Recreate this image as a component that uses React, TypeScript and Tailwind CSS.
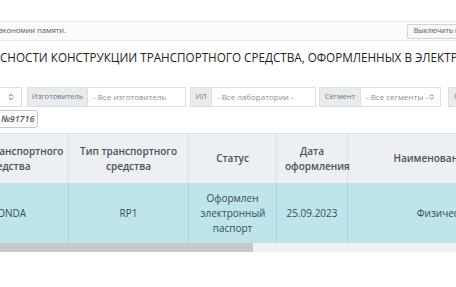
import { ChevronsUpDown } from "lucide-react";

const columns = [
  { title: "Марка транспортного средства", width: "w-[121px]" },
  { title: "Тип транспортного средства", width: "w-[120px]" },
  { title: "Статус", width: "w-[88px]" },
  { title: "Дата оформления", width: "w-[71px]" },
  { title: "Наименование заявителя", width: "w-[224px]" },
];

const row = ["HONDA", "RP1", "Оформлен электронный паспорт", "25.09.2023", "Физическое лицо"];

function Addon({ label, className }: { label: string; className: string }) {
  return (
    <div className={`flex h-[20px] shrink-0 items-center justify-center border border-[#dcdfe3] bg-[#e9ecef] text-[7.6px] text-[#6c757d] ${className}`}>
      {label}
    </div>
  );
}

export default function App() {
  return (
    <div className="h-[287px] w-[456px] overflow-hidden bg-white font-['Open_Sans',sans-serif] text-[#212529]">
      <div className="h-[21px]" />

      {/* notice bar */}
      <div className="flex h-[20px] items-center justify-between overflow-hidden border-y border-[#e6e8eb] bg-[#fafbfc]">
        <span className="-ml-[1px] text-[7.5px] text-[#555]">экономии памяти.</span>
        <button className="-mr-[40px] h-[15px] shrink-0 whitespace-nowrap rounded-[2px] border border-[#d4d4d4] bg-[#f7f7f7] px-[6px] text-[7px] text-[#555]">
          Выключить подсказку
        </button>
      </div>

      <h1 className="mt-[7px] whitespace-nowrap text-[11.7px] leading-[18px] font-normal text-[#222]">
        СНОСТИ КОНСТРУКЦИИ ТРАНСПОРТНОГО СРЕДСТВА, ОФОРМЛЕННЫХ В ЭЛЕКТРОННОМ ВИДЕ
      </h1>

      {/* filters */}
      <div className="mt-[21px] flex items-center whitespace-nowrap text-[8px]">
        <div className="flex h-[20px] w-[22px] shrink-0 items-center justify-end border border-l-0 border-[#dcdfe3] bg-white pr-[6px]">
          <ChevronsUpDown size={8} strokeWidth={2.5} className="text-[#444]" />
        </div>
        <Addon label="Изготовитель" className="ml-[5px] w-[61px]" />
        <div className="flex h-[20px] w-[98px] shrink-0 items-center border border-l-0 border-[#dcdfe3] px-[5px] text-[#8a8f94]">
          - Все изготовитель
        </div>
        <Addon label="ИЛ" className="ml-[4px] w-[22px]" />
        <div className="flex h-[20px] w-[104px] shrink-0 items-center border border-l-0 border-[#dcdfe3] px-[5px] text-[#8a8f94]">
          - Все лаборатории -
        </div>
        <Addon label="Сегмент" className="ml-[3px] w-[42px]" />
        <div className="flex h-[20px] w-[80px] shrink-0 items-center justify-between border border-l-0 border-[#dcdfe3] px-[5px] text-[#8a8f94]">
          <span>- Все сегменты -</span>
          <ChevronsUpDown size={8} strokeWidth={2.5} className="text-[#444]" />
        </div>
        <Addon label="Производитель" className="ml-[7px] w-[70px]" />
      </div>

      {/* badge */}
      <div className="mt-[3px] flex">
        <span className="-ml-[6px] flex h-[18px] items-center rounded-r-[3px] border border-[#c9c9c9] bg-white pl-[6px] pr-[3px] text-[9px] font-semibold italic text-[#555]">
          №91716
        </span>
      </div>

      {/* table */}
      <div className="mt-[5px] overflow-hidden border-t border-[#dee2e6]">
        <table className="-ml-[53px] w-[624px] min-w-[624px] table-fixed border-collapse text-[10px] leading-[15px]">
          <thead>
            <tr className="h-[49px] bg-[#edf0f2]">
              {columns.map((c, i) => (
                <th
                  key={c.title}
                  className={`${c.width} border-x border-[#dde1e4] ${i === 0 ? "px-[3px]" : "px-[8px]"} text-center font-semibold text-[#495057] ${i === 4 ? "whitespace-nowrap" : ""}`}
                >
                  {c.title}
                </th>
              ))}
            </tr>
          </thead>
          <tbody>
            <tr className="h-[60px] bg-[#bee5eb]">
              {row.map((v, i) => (
                <td key={i} className="border-x border-[#a9d6de] px-[8px] text-center text-[#3d4a4f]">
                  {i === 2 ? <span className="inline-block w-[64px]">{v}</span> : v}
                </td>
              ))}
            </tr>
          </tbody>
        </table>
      </div>

      {/* horizontal scrollbar */}
      <div className="flex h-[9px]">
        <div className="w-[253px] bg-[#c8c8c8]" />
        <div className="flex-1 bg-[#f0f1f0]" />
      </div>
    </div>
  );
}
